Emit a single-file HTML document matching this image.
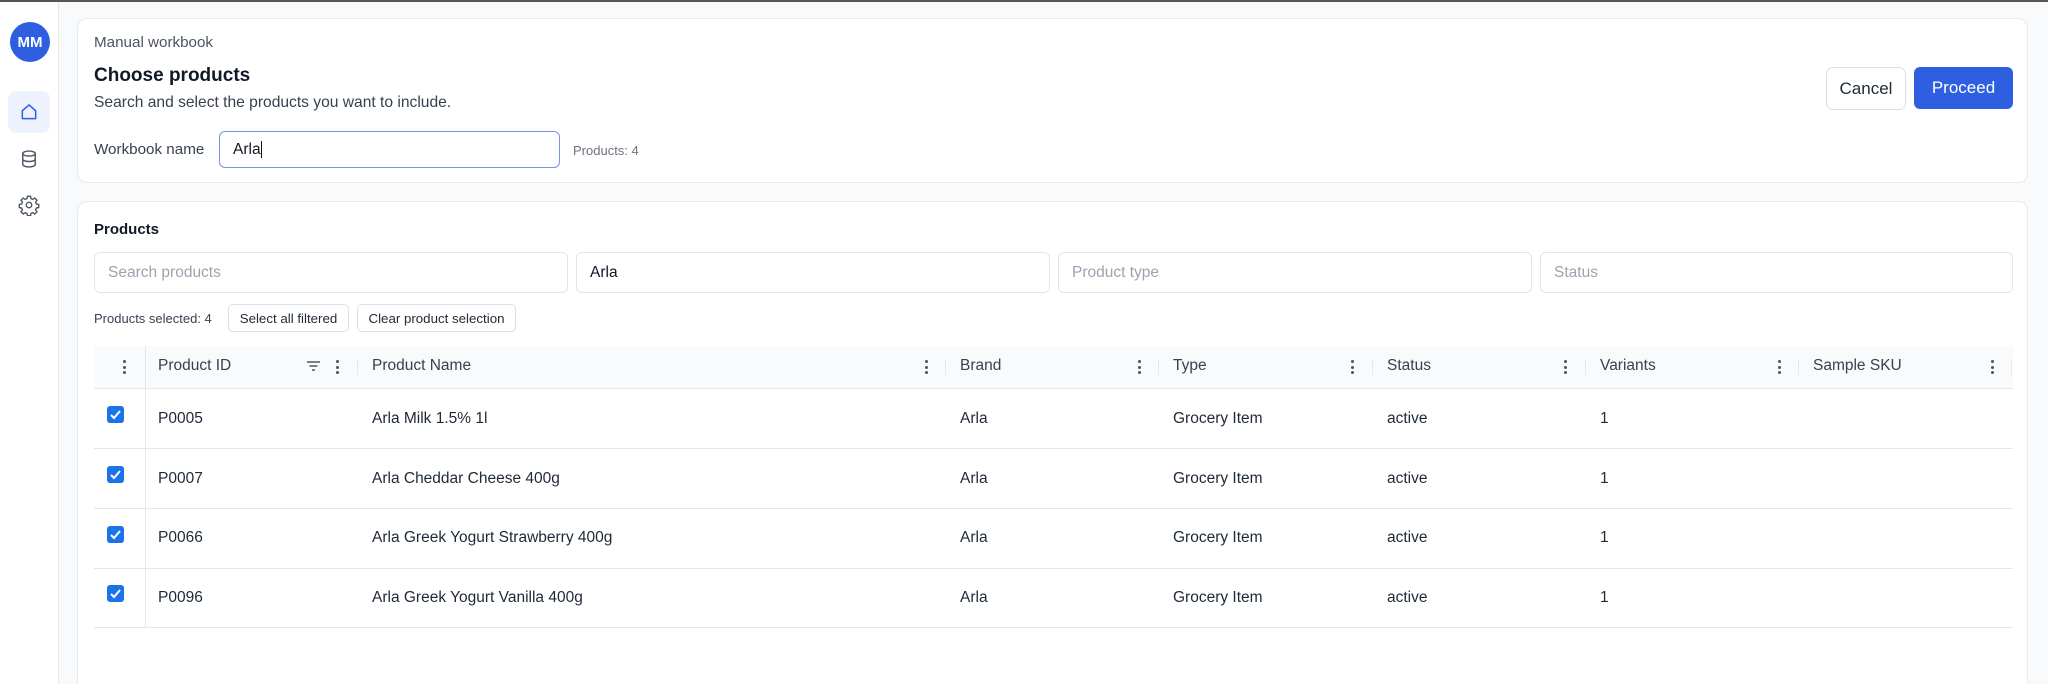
<!DOCTYPE html>
<html><head><meta charset="utf-8"><style>
*{box-sizing:border-box;margin:0;padding:0}
html,body{width:2048px;height:684px;overflow:hidden}
body{background:#f8fafc;font-family:"Liberation Sans",Arial,sans-serif;color:#1f2937;position:relative}
.a{position:absolute}
.topline{left:0;top:0;width:2048px;height:2px;background:#555}
.side{left:0;top:2px;width:59px;height:682px;background:#fff;border-right:1px solid #e5e7eb}
.card{background:#fff;border:1px solid #e8ebef;border-radius:10px}
.inp{border:1px solid #e2e5ea;border-radius:6px;background:#fff;font-size:15.5px;padding-left:13px;display:flex;align-items:center;color:#9ca3af}
.btn{border:1px solid #dcdfe4;border-radius:5px;background:#fff;font-size:13.3px;display:flex;align-items:center;justify-content:center;color:#1f2937}
.th{font-size:15.5px;color:#374151;top:357px}
.td{font-size:15.5px;color:#1f2937}
.keb{width:3px;height:14px;top:360px}
.keb i{display:block;width:3px;height:3px;border-radius:50%;background:#4b5563;margin-bottom:2.5px}
.sep{width:1px;height:16px;top:359px;background:#e5e7eb}
.cb{left:107px;width:17px;height:17px;border-radius:3px;background:#1a73e8}
.hl{height:1px;background:#e5e7eb;left:94px;width:1919px}
</style></head><body>
<div class="a topline"></div>
<div class="a side"></div>
<div class="a" style="left:10px;top:22px;width:40px;height:40px;border-radius:50%;background:#2d5fe0;color:#fff;font-weight:bold;font-size:15px;display:flex;align-items:center;justify-content:center">MM</div>
<div class="a" style="left:8px;top:91px;width:42px;height:42px;border-radius:8px;background:#eef2ff"></div>
<svg class="a" style="left:19px;top:102px" width="20" height="20" viewBox="0 0 24 24" fill="none" stroke="#2d5fe0" stroke-width="1.8" stroke-linejoin="round"><path d="M4 10.5L12 3.5l8 7V20H4z"/></svg>
<svg class="a" style="left:19px;top:149px" width="20" height="20" viewBox="0 0 24 24" fill="none" stroke="#4b5563" stroke-width="1.7"><ellipse cx="12" cy="5.5" rx="7.5" ry="3"/><path d="M4.5 5.5v13c0 1.7 3.4 3 7.5 3s7.5-1.3 7.5-3v-13M4.5 12c0 1.7 3.4 3 7.5 3s7.5-1.3 7.5-3"/></svg>
<svg class="a" style="left:18px;top:194px" width="22" height="22" viewBox="0 0 24 24" fill="none" stroke="#4b5563" stroke-width="1.5"><path d="M10.3 2.5h3.4l.5 2.6 1.9.8 2.2-1.5 2.4 2.4-1.5 2.2.8 1.9 2.6.5v3.4l-2.6.5-.8 1.9 1.5 2.2-2.4 2.4-2.2-1.5-1.9.8-.5 2.6h-3.4l-.5-2.6-1.9-.8-2.2 1.5-2.4-2.4 1.5-2.2-.8-1.9-2.6-.5v-3.4l2.6-.5.8-1.9-1.5-2.2 2.4-2.4 2.2 1.5 1.9-.8z"/><circle cx="12" cy="12" r="3"/></svg>

<div class="a card" style="left:77px;top:18px;width:1951px;height:165px"></div>
<div class="a" style="left:94px;top:34px;font-size:15.2px;color:#4b5563">Manual workbook</div>
<div class="a" style="left:94px;top:65px;font-size:19px;font-weight:bold;color:#111827">Choose products</div>
<div class="a" style="left:94px;top:94px;font-size:15.6px;color:#374151">Search and select the products you want to include.</div>
<div class="a" style="left:94px;top:141px;font-size:15.2px;color:#374151">Workbook name</div>
<div class="a inp" style="left:219px;top:131px;width:341px;height:37px;border:1.5px solid #7b93e6;color:#111827">Arla<span style="display:inline-block;width:1px;height:17px;background:#111"></span></div>
<div class="a" style="left:573px;top:143px;font-size:13px;color:#6b7280">Products: 4</div>
<div class="a btn" style="left:1826px;top:67px;width:80px;height:43px;font-size:17px;border-radius:7px">Cancel</div>
<div class="a btn" style="left:1914px;top:67px;width:99px;height:42px;font-size:17px;border-radius:6px;background:#2d5fe0;border-color:#2d5fe0;color:#fff">Proceed</div>

<div class="a card" style="left:77px;top:201px;width:1951px;height:495px"></div>
<div class="a" style="left:94px;top:221px;font-size:15px;font-weight:bold;color:#111827">Products</div>
<div class="a inp" style="left:94px;top:252px;width:474px;height:41px">Search products</div>
<div class="a inp" style="left:576px;top:252px;width:474px;height:41px;color:#111827">Arla</div>
<div class="a inp" style="left:1058px;top:252px;width:474px;height:41px">Product type</div>
<div class="a inp" style="left:1540px;top:252px;width:473px;height:41px">Status</div>
<div class="a" style="left:94px;top:311px;font-size:13px;color:#374151">Products selected: 4</div>
<div class="a btn" style="left:228px;top:304px;width:121px;height:28px">Select all filtered</div>
<div class="a btn" style="left:357px;top:304px;width:159px;height:28px">Clear product selection</div>

<div class="a" style="left:94px;top:346px;width:1919px;height:42px;background:#f8fafc"></div>
<div class="a hl" style="top:388px"></div>
<div class="a hl" style="top:448px"></div>
<div class="a hl" style="top:508px"></div>
<div class="a hl" style="top:568px"></div>
<div class="a hl" style="top:627px"></div>
<div class="a" style="left:145px;top:346px;width:1px;height:281px;background:#e5e7eb"></div>

<div class="a keb" style="left:123px"><i></i><i></i><i></i></div>
<div class="a th" style="left:158px">Product ID</div>
<svg class="a" style="left:306px;top:359px" width="15" height="14" viewBox="0 0 15 14" stroke="#4b5563" stroke-width="1.5"><path d="M1 3h13M3.5 7h8M6 11h3"/></svg>
<div class="a keb" style="left:336px"><i></i><i></i><i></i></div>
<div class="a sep" style="left:357px"></div>
<div class="a th" style="left:372px">Product Name</div>
<div class="a keb" style="left:925px"><i></i><i></i><i></i></div>
<div class="a sep" style="left:945px"></div>
<div class="a th" style="left:960px">Brand</div>
<div class="a keb" style="left:1138px"><i></i><i></i><i></i></div>
<div class="a sep" style="left:1158px"></div>
<div class="a th" style="left:1173px">Type</div>
<div class="a keb" style="left:1351px"><i></i><i></i><i></i></div>
<div class="a sep" style="left:1372px"></div>
<div class="a th" style="left:1387px">Status</div>
<div class="a keb" style="left:1564px"><i></i><i></i><i></i></div>
<div class="a sep" style="left:1585px"></div>
<div class="a th" style="left:1600px">Variants</div>
<div class="a keb" style="left:1778px"><i></i><i></i><i></i></div>
<div class="a sep" style="left:1798px"></div>
<div class="a th" style="left:1813px">Sample SKU</div>
<div class="a keb" style="left:1991px"><i></i><i></i><i></i></div>
<div class="a sep" style="left:2011px"></div>

<div class="a cb" style="top:406px"><svg width="17" height="17" viewBox="0 0 17 17"><path d="M4 9l3 3 6-7" fill="none" stroke="#fff" stroke-width="2"/></svg></div>
<div class="a td" style="left:158px;top:410px">P0005</div><div class="a td" style="left:372px;top:410px">Arla Milk 1.5% 1l</div><div class="a td" style="left:960px;top:410px">Arla</div><div class="a td" style="left:1173px;top:410px">Grocery Item</div><div class="a td" style="left:1387px;top:410px">active</div><div class="a td" style="left:1600px;top:410px">1</div>

<div class="a cb" style="top:466px"><svg width="17" height="17" viewBox="0 0 17 17"><path d="M4 9l3 3 6-7" fill="none" stroke="#fff" stroke-width="2"/></svg></div>
<div class="a td" style="left:158px;top:470px">P0007</div><div class="a td" style="left:372px;top:470px">Arla Cheddar Cheese 400g</div><div class="a td" style="left:960px;top:470px">Arla</div><div class="a td" style="left:1173px;top:470px">Grocery Item</div><div class="a td" style="left:1387px;top:470px">active</div><div class="a td" style="left:1600px;top:470px">1</div>

<div class="a cb" style="top:526px"><svg width="17" height="17" viewBox="0 0 17 17"><path d="M4 9l3 3 6-7" fill="none" stroke="#fff" stroke-width="2"/></svg></div>
<div class="a td" style="left:158px;top:529px">P0066</div><div class="a td" style="left:372px;top:529px">Arla Greek Yogurt Strawberry 400g</div><div class="a td" style="left:960px;top:529px">Arla</div><div class="a td" style="left:1173px;top:529px">Grocery Item</div><div class="a td" style="left:1387px;top:529px">active</div><div class="a td" style="left:1600px;top:529px">1</div>

<div class="a cb" style="top:585px"><svg width="17" height="17" viewBox="0 0 17 17"><path d="M4 9l3 3 6-7" fill="none" stroke="#fff" stroke-width="2"/></svg></div>
<div class="a td" style="left:158px;top:589px">P0096</div><div class="a td" style="left:372px;top:589px">Arla Greek Yogurt Vanilla 400g</div><div class="a td" style="left:960px;top:589px">Arla</div><div class="a td" style="left:1173px;top:589px">Grocery Item</div><div class="a td" style="left:1387px;top:589px">active</div><div class="a td" style="left:1600px;top:589px">1</div>
</body></html>
